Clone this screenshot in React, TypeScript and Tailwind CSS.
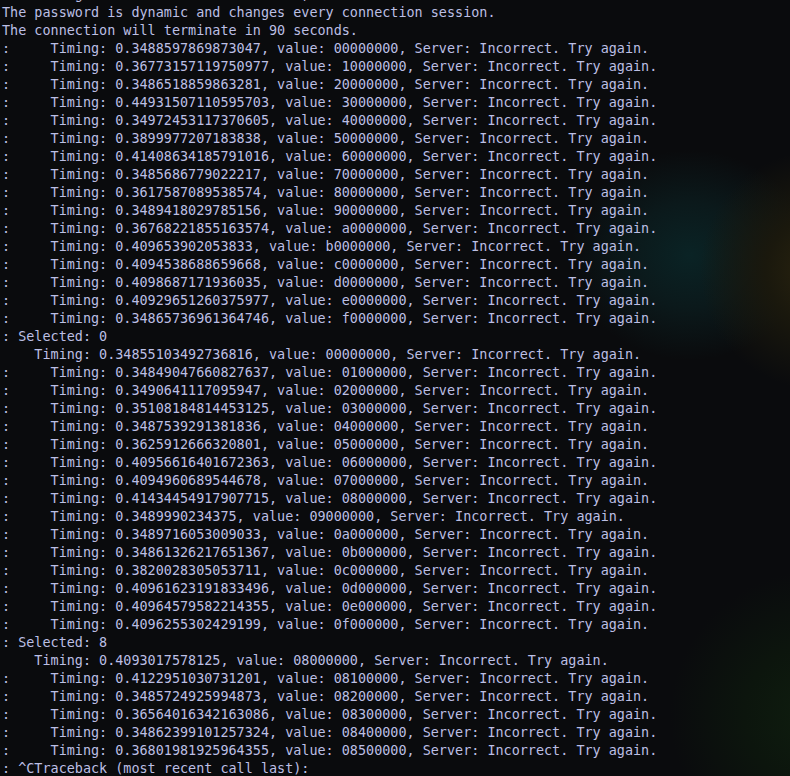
const sweep1: [string, string][] = [
  ['0.3488597869873047', '00000000'],
  ['0.36773157119750977', '10000000'],
  ['0.3486518859863281', '20000000'],
  ['0.44931507110595703', '30000000'],
  ['0.34972453117370605', '40000000'],
  ['0.3899977207183838', '50000000'],
  ['0.41408634185791016', '60000000'],
  ['0.3485686779022217', '70000000'],
  ['0.3617587089538574', '80000000'],
  ['0.3489418029785156', '90000000'],
  ['0.36768221855163574', 'a0000000'],
  ['0.409653902053833', 'b0000000'],
  ['0.4094538688659668', 'c0000000'],
  ['0.4098687171936035', 'd0000000'],
  ['0.40929651260375977', 'e0000000'],
  ['0.34865736961364746', 'f0000000'],
];

const sweep2: [string, string][] = [
  ['0.34849047660827637', '01000000'],
  ['0.3490641117095947', '02000000'],
  ['0.35108184814453125', '03000000'],
  ['0.3487539291381836', '04000000'],
  ['0.3625912666320801', '05000000'],
  ['0.40956616401672363', '06000000'],
  ['0.4094960689544678', '07000000'],
  ['0.41434454917907715', '08000000'],
  ['0.3489990234375', '09000000'],
  ['0.3489716053009033', '0a000000'],
  ['0.34861326217651367', '0b000000'],
  ['0.3820028305053711', '0c000000'],
  ['0.40961623191833496', '0d000000'],
  ['0.40964579582214355', '0e000000'],
  ['0.4096255302429199', '0f000000'],
];

const sweep3: [string, string][] = [
  ['0.4122951030731201', '08100000'],
  ['0.3485724925994873', '08200000'],
  ['0.36564016342163086', '08300000'],
  ['0.34862399101257324', '08400000'],
  ['0.36801981925964355', '08500000'],
];

const row = (prefix: string, [t, v]: [string, string]) =>
  `${prefix}Timing: ${t}, value: ${v}, Server: Incorrect. Try again.`;

const lines: string[] = [
  'Submit a guess for the hidden secrets, the checker will tell if it is correct.',
  'The password is dynamic and changes every connection session.',
  'The connection will terminate in 90 seconds.',
  ...sweep1.map(r => row(':     ', r)),
  ': Selected: 0',
  row('    ', ['0.34855103492736816', '00000000']),
  ...sweep2.map(r => row(':     ', r)),
  ': Selected: 8',
  row('    ', ['0.4093017578125', '08000000']),
  ...sweep3.map(r => row(':     ', r)),
  ': ^CTraceback (most recent call last):',
];

export default function App() {
  return (
    <div className="relative w-[790px] h-[776px] overflow-hidden bg-[#0a0b0d]">
      {/* background glows of the terminal theme */}
      <div className="absolute left-[570px] top-[150px] w-[240px] h-[210px] rounded-full bg-[radial-gradient(closest-side,#0a2325_0%,#0b191b_50%,transparent_100%)]" />
      <div className="absolute left-[700px] top-[150px] w-[240px] h-[240px] rounded-full bg-[radial-gradient(closest-side,#2a240f_0%,#1a180d_45%,transparent_100%)]" />
      <div className="absolute left-[670px] top-[570px] w-[300px] h-[290px] rounded-full bg-[radial-gradient(closest-side,#0f1e0f_0%,#0c150d_50%,transparent_100%)]" />
      <div className="relative -mt-[14px] pl-[2px] font-['DejaVu_Sans_Mono',monospace] text-[13.45px] leading-[18px] text-[#bcbfe4] whitespace-pre">
        {lines.map((l, i) => (
          <div key={i} className="h-[18px]">{l}</div>
        ))}
      </div>
    </div>
  );
}
